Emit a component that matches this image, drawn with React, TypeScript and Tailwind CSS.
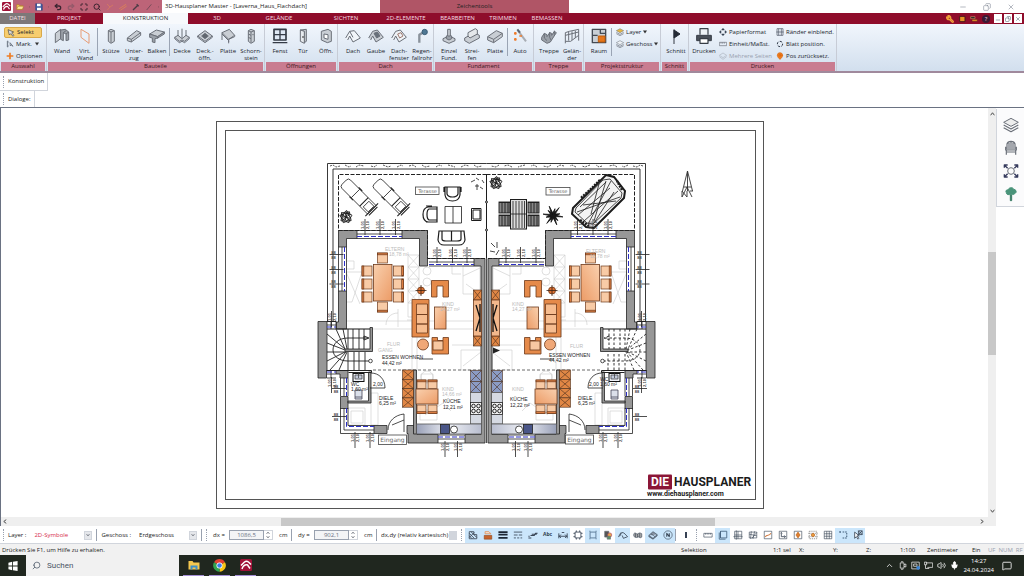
import React from "react";
import type { ReactNode } from "react";
import { Search, Undo2, Redo2, Maximize, Wrench, Mic, Volume2, MessageSquare, ChevronUp, Minus, Copy, X, MapPin } from "lucide-react";

/* ---------- small shared pieces ---------- */

const Svg = ({ children, className = "h-4 w-4", box = "0 0 24 24" }: { children: ReactNode; className?: string; box?: string }) => (
  <svg viewBox={box} className={className} fill="none" stroke="#6b7079" strokeWidth="1.5" strokeLinejoin="round" aria-hidden="true">
    {children}
  </svg>
);

const Grip = () => <span className="h-3 shrink-0 border-l border-dotted border-gray-400" />;
const Rule = () => <span className="h-3 shrink-0 border-l border-gray-400" />;

/* ---------- ribbon icons ---------- */

const F = "#c9ced4";
const D = "#9ba1a9";
const icons: Record<string, ReactNode> = {
  wand: <><path d="M2 8l8-6v14l-8 6z" fill={F} /><path d="M10 3l7-1 5 4v12l-4 1V9l-4-2v12l-4-2z" fill={D} /><path d="M14 7l4-3M18 9l4-3" /></>,
  virt: <path d="M6 2l12 7v14L6 14z" stroke="#e79b74" />,
  stuetze: <><path d="M8 4l4-2 5 2v16l-5 3-4-3z" fill={F} /><path d="M8 4l4 2 5-2M12 6v16" /></>,
  unter: <><path d="M2 15L16 4l6 3v4L8 21l-6-2z" fill={F} /><path d="M2 15l6 2L22 7M8 17v4" /></>,
  balken: <><path d="M1 9l10-6 12 3-10 7z" fill={F} /><path d="M1 9v5l4 1v6l4 1v-6l4-1 10-6V6L13 13zM13 13v3" fill={D} /></>,
  decke: <><path d="M1 14l5-3 6 5 6-5 5 3-7 6-4-2-4 2z" fill={F} /><path d="M6 3v9M12 1v14M18 3v9M1 14v2l7 6 4-2 4 2 7-6v-2" /></>,
  deckoeffn: <><path d="M1 12l11-8 11 8-11 8z" fill={F} /><path d="M7 12l5-4 5 4-5 4z" fill="#60666e" /><path d="M1 12v2l11 8 11-8v-2" /></>,
  platte: <><path d="M3 7l11-5 8 9-9 6z" fill={F} /><path d="M3 7v11M3 9l10 10v4M13 17l9-4v-2M13 17v4" /></>,
  schorn: <><path d="M8 4l4-2 5 2v16l-5 3-4-3z" fill={F} /><path d="M8 4l4 2 5-2M12 6v16M8 9l4 2M8 14l4 2M14 10h2" /></>,
  fenst: <><path d="M3 2h18v16H3z" fill="#dfe9f5" stroke="#343b46" strokeWidth="2.5" /><path d="M12 2v16M3 10h18M1 22h22" stroke="#343b46" strokeWidth="2" /></>,
  tuer: <><path d="M8 3l9-1v18l-3 2V5z" fill={F} /><path d="M8 3v17l6 3V5z" fill="#e7ebef" /><path d="M12 12v3" stroke="#333" /></>,
  oeffn: <><path d="M5 5l10-3 5 3v15l-6 2-9-4z" fill={F} /><path d="M9 9l6 1v7l-6-2z" fill="#fff" /></>,
  dach: <path d="M1 15L7 5l7-1 9 11-11 6-5-9-3 6M7 5l5 9" fill="#f2f6fa" />,
  gaube: <><path d="M1 15L7 5l7-2 9 11-11 7-5-9-3 6" fill={F} /><path d="M9 8l5-2 4 6-5 3z" fill="#68707a" /></>,
  dachfenster: <><path d="M1 15L7 5l7-2 9 11-11 7-5-9-3 6" fill="#eef2f6" /><path d="M10 9l5-2 3 5-5 3z" stroke="#a07a70" /></>,
  regen: <><path d="M8 22V10l5-3h3" strokeWidth="3.5" stroke="#8a929b" /><circle cx="16" cy="6" r="4" fill="#4f7894" stroke="#3e6079" /></>,
  einzel: <><path d="M3 16l9-4 9 4v3l-9 4-9-4z" fill={F} /><path d="M8 12l4-2 4 2v4l-4 2-4-2z" fill={D} /><path d="M10 2h4v10h-4z" fill={F} /></>,
  streifen: <><path d="M1 15l15-8 7 4v4L8 23l-7-4z" fill={F} /><path d="M6 12V7l11-6 3 2v6L9 15z" fill="#e5e8eb" /></>,
  platte2: <><path d="M1 13L14 4l9 4v5L10 22l-9-4z" fill={F} /><path d="M1 13l9 4L23 8M10 17v5" /></>,
  auto: <><path d="M9 4l12 16" strokeWidth="3" stroke="#a8adb4" /><path d="M8 2l4 5" stroke="#5c6570" strokeWidth="3" /><path d="M3 8h4M5 6v4M3 17h4M5 15v4M11 12h4" stroke="#ef7b2b" strokeWidth="2.5" /></>,
  treppe: <><path d="M1 14l4-6 4 2v3l4-6 3 1v3l4-6 3 2-9 14-5 2-8-5z" fill={D} /><path d="M5 8v7l4 4M13 6v8l2 4M20 4v6" /></>,
  gelaender: <><path d="M2 7l6-2 14-3v17M2 7v16M2 20h8l12-9M7 6v13M12 5v13M17 4v11M2 11l20-5" /></>,
  raum: <><path d="M2 2h20v20H2z" fill={F} stroke="#454b54" strokeWidth="2" /><path d="M11 12h10v9H11z" fill="#e6761b" stroke="#c25e0c" /><path d="M2 11h8M14 2v6h8" stroke="#454b54" strokeWidth="2" /></>,
  schnitt: <><path d="M9 2v22" stroke="#323842" strokeWidth="1.5" /><path d="M9 3l9 6-9 6z" fill="#252b36" stroke="#252b36" /></>,
  drucken: <><path d="M6 10V1h12v9" fill="#eef2f6" stroke="#3b414a" strokeWidth="1.8" /><path d="M1 11h22v8H1z" fill="#4a5059" stroke="#363c45" /><path d="M6 16h12v7H6z" fill="#fff" stroke="#363c45" strokeWidth="1.8" /></>,
};

const Tool = ({ icon, label }: { icon: string; label: string }) => (
  <button className="flex w-[22px] shrink-0 flex-col items-center gap-1">
    <Svg>{icons[icon]}</Svg>
    <span className="whitespace-pre text-center leading-[7px]">{label}</span>
  </button>
);

const Group = ({ title, className, children }: { title: string; className: string; children: ReactNode }) => (
  <section className={`flex shrink-0 flex-col border-r border-[#c7ccd6] ${className}`}>
    <div className="flex min-h-0 flex-1 items-start gap-px px-1 pt-1">{children}</div>
    <h2 className="mx-px h-[9px] shrink-0 bg-[#c97c90] text-center leading-[9px] text-[#3b1722]">{title}</h2>
  </section>
);

const Divider = () => <span className="h-7 shrink-0 border-l border-[#9aa4b4]" />;

const MiniTool = ({ children, icon, muted = false }: { children: ReactNode; icon: ReactNode; muted?: boolean }) => (
  <button className={`flex h-3 items-center gap-[2px] whitespace-nowrap ${muted ? "text-gray-400" : ""}`}>
    {icon}
    {children}
  </button>
);

const MiniColumn = ({ children }: { children: ReactNode }) => <div className="-mt-[2px] flex flex-col pl-[3px]">{children}</div>;

const Caret = () => <Svg className="h-1 w-1" box="0 0 8 8"><path d="M0 1h8L4 7z" fill="#333" stroke="none" /></Svg>;

const LayersIcon = ({ color }: { color: string }) => (
  <Svg className="h-2 w-2"><path d="M1 8l11-6 11 6-11 6z" fill={color} /><path d="M1 13l11 6 11-6M1 17l11 6 11-6" strokeWidth="2" /></Svg>
);

const Ribbon = () => (
  <div className="flex h-[49px] shrink-0 overflow-hidden border-b-2 border-[#a0899c] bg-linear-to-b from-[#f1f6fc] to-[#d2dfee] text-[6px] font-medium text-[#20242c]">
    <Group title="Auswahl" className="w-[47px]">
      <div className="-mt-px flex flex-col">
        <button className="flex h-[11px] items-center gap-[2px] rounded-xs border border-[#d9a94a] bg-[#f7cd6e] px-[2px]">
          <Svg className="h-2 w-2"><path d="M3 2l4 16 4-4 7 8 3-3-7-7 6-3z" fill="#ddd" stroke="#444" strokeWidth="2" /></Svg>
          Selekt
        </button>
        <MiniTool icon={<Svg className="ml-[2px] h-2 w-2"><path d="M5 2v20M2 6h6M2 18h6M2 12h4M12 8l1 10 3-3 5 4z" stroke="#4c5665" strokeWidth="2" /></Svg>}>Mark.&nbsp; <Caret /></MiniTool>
        <MiniTool icon={<Svg className="ml-[2px] h-2 w-2"><path d="M12 2v20M2 12h20" stroke="#ee7d24" strokeWidth="5" /></Svg>}>Optionen</MiniTool>
      </div>
    </Group>
    <Group title="Bauteile" className="w-[218px]">
      <Tool icon="wand" label="Wand" />
      <Tool icon="virt" label={"Virt.\nWand"} />
      <Divider />
      <div className="w-px" />
      <Tool icon="stuetze" label="Stütze" />
      <Tool icon="unter" label={"Unter-\nzug"} />
      <Tool icon="balken" label="Balken" />
      <Divider />
      <Tool icon="decke" label="Decke" />
      <Tool icon="deckoeffn" label={"Deck.-\nöffn."} />
      <Tool icon="platte" label="Platte" />
      <Tool icon="schorn" label={"Schorn-\nstein"} />
    </Group>
    <Group title="Öffnungen" className="w-[73px]">
      <Tool icon="fenst" label="Fenst" />
      <Tool icon="tuer" label="Tür" />
      <Tool icon="oeffn" label="Öffn." />
    </Group>
    <Group title="Dach" className="w-24">
      <Tool icon="dach" label="Dach" />
      <Tool icon="gaube" label="Gaube" />
      <Tool icon="dachfenster" label={"Dach-\nfenster"} />
      <Tool icon="regen" label={"Regen-\nfallrohr"} />
    </Group>
    <Group title="Fundament" className="w-[100px]">
      <Tool icon="einzel" label={"Einzel\nFund."} />
      <Tool icon="streifen" label={"Strei-\nfen"} />
      <Tool icon="platte2" label="Platte" />
      <Divider />
      <Tool icon="auto" label="Auto" />
    </Group>
    <Group title="Treppe" className="w-[50px]">
      <Tool icon="treppe" label="Treppe" />
      <Tool icon="gelaender" label={"Gelän-\nder"} />
    </Group>
    <Group title="Projektstruktur" className="w-[77px]">
      <Tool icon="raum" label="Raum" />
      <Divider />
      <MiniColumn>
        <MiniTool icon={<LayersIcon color="#e8b73e" />}>Layer <Caret /></MiniTool>
        <MiniTool icon={<LayersIcon color="#eef2f6" />}>Geschoss <Caret /></MiniTool>
      </MiniColumn>
    </Group>
    <Group title="Schnitt" className="w-7">
      <Tool icon="schnitt" label="Schnitt" />
    </Group>
    <Group title="Drucken" className="w-[148px]">
      <Tool icon="drucken" label="Drucken" />
      <MiniColumn>
        <MiniTool icon={<Svg className="h-2 w-2"><path d="M12 1l4 5H8zM12 23l4-5H8zM1 12l5-4v8zM23 12l-5-4v8z" fill="#2f3a4a" stroke="#2f3a4a" /></Svg>}>Papierformat</MiniTool>
        <MiniTool icon={<Svg className="h-2 w-2"><path d="M1 7h22v10H1zM6 7v4M11 7v4M16 7v4" strokeWidth="2" /></Svg>}>Einheit/Maßst.</MiniTool>
        <MiniTool muted icon={<Svg className="h-2 w-2 opacity-40"><path d="M1 10l11-7 11 7-11 7zM1 14l11 8 11-8" strokeWidth="2" /></Svg>}>Mehrere Seiten</MiniTool>
      </MiniColumn>
      <MiniColumn>
        <MiniTool icon={<Svg className="h-2 w-2"><path d="M3 2h18v20H3zM8 2v20M16 2v20M1 12h22" stroke="#4a5260" strokeWidth="2" /></Svg>}>Ränder einblend.</MiniTool>
        <MiniTool icon={<Svg className="h-2 w-2"><circle cx="12" cy="12" r="8" stroke="#303a48" strokeWidth="3" strokeDasharray="8 4" /></Svg>}>Blatt position.</MiniTool>
        <MiniTool icon={<MapPin className="h-2 w-2 fill-[#ef7d1e] text-[#d9660d]" aria-hidden="true" />}>Pos zurücksetz.</MiniTool>
      </MiniColumn>
    </Group>
  </div>
);

/* ---------- title bar and tabs ---------- */

const Logo = ({ className }: { className: string }) => (
  <svg viewBox="0 0 24 24" className={className} aria-hidden="true">
    <rect width="24" height="24" rx="3" fill="#a01238" />
    <path d="M2 13L9 6q4-3 8 0l5 5M4 20c2-7 7-9 12-8M15 12l5 7" fill="none" stroke="#fff" strokeWidth="3" />
  </svg>
);

const TitleBar = () => (
  <header className="flex h-[13px] shrink-0 items-stretch bg-white text-[6px] text-[#222]">
    <div className="flex w-[13px] shrink-0 items-center justify-center"><Logo className="h-[9px] w-[9px]" /></div>
    <div className="flex w-[149px] shrink-0 items-center gap-[5px] bg-[#bd6478] px-[3px] text-[#3b2430]">
      <button aria-label="Öffnen"><Svg className="h-2 w-2"><path d="M2 5h7l2 3h9v11H2z" fill="#f0c657" stroke="#a97d1f" /><path d="M2 19l4-9h17l-4 9z" fill="#fbe29a" stroke="#a97d1f" /></Svg></button>
      <Caret />
      <button aria-label="Speichern"><Svg className="h-2 w-2"><path d="M2 2h17l3 3v17H2z" fill="#3f5ba0" stroke="#2f437b" /><path d="M6 2h11v8H6zM6 14h12v8H6z" fill="#fff" stroke="none" /></Svg></button>
      <Caret />
      <button aria-label="Rückgängig"><Undo2 className="h-2 w-2" strokeWidth={4} /></button>
      <button aria-label="Wiederholen"><Redo2 className="h-2 w-2 text-[#94596a]" strokeWidth={4} /></button>
      <button aria-label="Alles zeigen"><Maximize className="h-2 w-2" strokeWidth={3} /></button>
      <button aria-label="Zoom"><Search className="h-2 w-2" strokeWidth={3} /></button>
      <button aria-label="Hilfslinie"><Svg className="h-2 w-2"><path d="M3 3l9 9 9-6M12 12L4 21" stroke="#dd8159" strokeWidth="2" /></Svg></button>
      <button aria-label="Parallele"><Svg className="h-2 w-2"><path d="M1 17L21 4M4 22L23 9" stroke="#e58d4f" strokeWidth="2" /></Svg></button>
      <button aria-label="Pipette"><Svg className="h-2 w-2"><path d="M3 21L16 8M14 4l6 6" stroke="#4a3b45" strokeWidth="4" /></Svg></button>
      <button aria-label="Messen"><Svg className="h-2 w-2"><path d="M5 21L19 4" stroke="#7a4c5b" strokeWidth="3" /></Svg></button>
      <Caret />
    </div>
    <h1 className="flex w-[218px] shrink-0 items-center overflow-hidden pl-[3px] whitespace-nowrap">3D-Hausplaner Master - [Laverna_Haus_Flachdach]</h1>
    <div className="flex w-[189px] shrink-0 items-center justify-center bg-[#b05566]">Zeichentools</div>
    <div className="flex flex-1 items-center justify-end gap-4 pr-[9px] text-gray-500">
      <button aria-label="Minimieren"><Minus className="h-2 w-2" strokeWidth={1.5} /></button>
      <button aria-label="Verkleinern"><Copy className="h-2 w-2 -scale-x-100" strokeWidth={1.5} /></button>
      <button aria-label="Schließen"><X className="h-2 w-2" strokeWidth={1.5} /></button>
    </div>
  </header>
);

const tabs: [string, string][] = [
  ["PROJEKT", "w-[68px]"], ["KONSTRUKTION", "w-[85px] bg-[#f7f9fc] text-[#222]"], ["3D", "w-[58px]"], ["GELÄNDE", "w-[66px]"],
  ["SICHTEN", "w-[68px]"], ["2D-ELEMENTE", "w-[52px]"], ["BEARBEITEN", "w-[51px]"], ["TRIMMEN", "w-10"], ["BEMASSEN", "w-12"],
];

const Tabs = () => (
  <nav className="flex h-[11px] shrink-0 items-stretch bg-[#8f0d2b] text-[6px] font-medium text-[#f5dfe4]">
    <button className="w-[35px] bg-[#7d7879]">DATEI</button>
    {tabs.map(([name, cls]) => <button key={name} className={cls}>{name}</button>)}
    <div className="ml-auto flex items-center gap-1 pr-[2px]">
      <button aria-label="Einstellungen"><Wrench className="h-2 w-2 -scale-x-100 text-[#f0a13a]" strokeWidth={4} /></button>
      <button aria-label="Fenster"><Svg className="h-2 w-2"><path d="M5 4h16v16H5z" fill="#e79328" stroke="#4b1a1a" strokeWidth="3" /></Svg></button>
      <button aria-label="Ansicht"><Svg className="h-2 w-2"><path d="M2 5h13v6H2z" fill="#222" stroke="#f0b27a" /><path d="M6 13h16v6H6z" fill="#e79328" stroke="#5a1a20" /></Svg></button>
      <button aria-label="Hilfe" className="h-2 w-2 rounded-full bg-[#3b1b34] leading-[8px]">?</button>
      <div className="flex gap-[2px]">
        <button aria-label="Dokument minimieren" className="flex h-[9px] w-2 items-end justify-center bg-white text-gray-600"><Minus className="h-[6px] w-[6px]" /></button>
        <button aria-label="Dokument verkleinern" className="flex h-[9px] w-2 items-center justify-center bg-white text-gray-600"><Copy className="h-[6px] w-[6px] -scale-x-100" /></button>
        <button aria-label="Dokument schließen" className="flex h-[9px] w-2 items-center justify-center bg-white text-gray-600"><X className="h-[6px] w-[6px]" /></button>
      </div>
    </div>
  </nav>
);

/* ---------- floor plan ---------- */

const range = (n: number) => Array.from({ length: n }, (_, i) => i);
const mx = (x: number) => 973 - x;

const Crossed = ({ x, y, w, h, fill }: { x: number; y: number; w: number; h: number; fill: string }) => (
  <g stroke="#4a2d1c" strokeWidth="0.6">
    <rect x={x} y={y} width={w} height={h} fill={fill} />
    <path d={`M${x} ${y}l${w} ${h}M${x + w} ${y}l${-w} ${h}`} />
  </g>
);

const Chair = ({ x, y, w = 10, h = 10, back }: { x: number; y: number; w?: number; h?: number; back: "l" | "r" | "t" | "b" }) => (
  <g stroke="#6d3a1c" strokeWidth="0.7">
    <rect x={x} y={y} width={w} height={h} fill="#f8cba6" />
    {back === "l" && <rect x={x} y={y} width="1.8" height={h} fill="#e08144" />}
    {back === "r" && <rect x={x + w - 1.8} y={y} width="1.8" height={h} fill="#e08144" />}
    {back === "t" && <rect x={x} y={y} width={w} height="1.8" fill="#e08144" />}
    {back === "b" && <rect x={x} y={y + h - 1.8} width={w} height="1.8" fill="#e08144" />}
  </g>
);

const Win = ({ d, o }: { d: string; o: string }) => (
  <g fill="none">
    <path d={d} stroke="#222" strokeWidth="0.8" />
    <path d={o} stroke="#2c2fc4" strokeWidth="1" strokeDasharray="5 2" />
  </g>
);

/* One semi-detached unit; the second one is its mirror image. */
const Unit = ({ dashedStairs = false }: { dashedStairs?: boolean }) => (
  <g>
    {/* faint plan of the upper storey */}
    <g fill="none" stroke="#c9c9c9" strokeWidth="0.6">
      <path d="M346 261h8v8h-8M346 272h16l-10 30h-6M346 272l14 32M408 255h11v62h-11zM408 267h11M408 279h11M408 291h11M408 303h11M408 255l11 12M419 255l-11 12M408 267l11 12M419 267l-11 12M408 279l11 12M419 279l-11 12M408 291l11 12M419 291l-11 12M463 266h17v28h-17zM463 276l17-8M466 284l14 10M452 266v8h9" />
      <path d="M346 321h135M346 329h135M398 313c-8 0-12 6-12 12M398 309v18M407 320h5v50M452 345h29v25M461 350h20v20h-20zM463 366l18-14M421 374h12v8h-12zM417 330v40M371 393h7v32h-7zM348 408h17v17h-17zM351 411h12v12h-12zM420 410h17v10h-17zM425 415l18-12 8 8" />
      <circle cx="427" cy="271" r="4" /><circle cx="427" cy="282" r="4" /><circle cx="427" cy="377" r="6" />
    </g>
    {/* walls */}
    <g fill="#979797" stroke="#222" strokeWidth="0.8">
      <path d="M338.500 230.500H357v8H346.500V247h-8zM402 230.500h25.500V266H419.500V238.500H402zM474 258.500h11V443H465v-8.500h16V266H474zM338.500 291h8v38h-10v-7h2z" />
      <path d="M318 321.500h9v49h-.5v7.500H318zM336 370.500h12v7.500h-8v-4h-4zM340.500 396.500h7.500v12h-7.500zM374 425.500h13v8h-13zM407 425.500h7V433h3v1.500h21v8.500h-30v-9.500h-1z" />
      <path d="M370 327.500h2.500v24H345v-2.500h25zM368.500 372h2.500v31h-23v-2h20.500zM413.500 370h3v64h-3z" />
    </g>
    <path d="M327 321.500h9M327 329h43M326.500 370.500h45v2h-23" fill="none" stroke="#222" strokeWidth="1" />
    {/* windows */}
    <Win d="M357 230.500h45M357 234h45M357 238.500h45" o="M357 236.500h45" />
    <Win d="M429 258.500h45M429 262h45M429 266h45" o="M429 264.500h45" />
    <Win d="M338.500 247v44M342 247v44M346.500 247v44" o="M344.500 247v44" />
    <Win d="M340.500 378v18M344 378v18M348 378v18" o="M346.500 378v18" />
    <Win d="M340.500 408v25.500H374M344 408v22h30M348 408v17.500h26" o="M346.500 408v18.500H374" />
    <Win d="M438 435h27M438 439h27M438 443h27" o="M438 437h27" />
    <Win d="M327 325h9M331 321v8M336 321v8M327 374h9M327 378h9M331 371v7" o="M327 327h9M327 372h9" />
    {/* stairs */}
    <g fill="none" stroke="#222" strokeWidth="0.9" strokeDasharray={dashedStairs ? "2.5 2" : undefined}>
      <path d="M364 329v20M359 329v20M353 329v20M348 329v20M343 329l4 20M336 329l9 20M327 334l18 15M327 343l18 7M327 352h18M327 361l18-9M330 370l16-18M339 370l8-18M348 370v-18M354 370v-18M359 370v-18M365 370v-18" />
      <path d="M368 338h-20c-10 0-15 6-15 12s6 11 15 11h22M364 336l5 2-5 2z" />
    </g>
    <circle cx="370.500" cy="361" r="1.800" fill="#fff" stroke="#222" strokeWidth="0.8" />
    <path d="M373 370H481" stroke="#444" strokeWidth="0.8" strokeDasharray="3 2" />
    {/* doors */}
    <g fill="none" stroke="#222" strokeWidth="0.8">
      <path d="M370 388h15c0-9-6-15-14-15M388 430c0-9 7-15 16-16v18M392 425l12-5M433 359h-14" />
    </g>
    {/* dining area */}
    <g stroke="#6d3a1c" strokeWidth="0.8">
      <rect x="373.500" y="264.500" width="18.500" height="36.500" fill="url(#wood)" />
      <rect x="434.500" y="307" width="11.500" height="22" fill="url(#wood)" />
      <path d="M431.500 280.500H448.500V297H443v-11h-6v11h-5.500zM412 299.500h17V337h-17z" fill="#e58a4a" />
      <path d="M416.500 304H427.500v10.500h-11zM416.500 314.500h11V324h-11zM416.500 324h11v9h-11z" fill="#f7bd90" />
      <path d="M432 337.500h5.500v3H443v-3h5.500V354H432z" fill="#e58a4a" />
      <rect x="433" y="341" width="10" height="9" fill="#f7c8a2" />
      <circle cx="423" cy="344.500" r="5.500" fill="#f0a878" />
      <circle cx="421" cy="290.500" r="3.500" fill="#dd7030" />
      <path d="M415.500 290.500h11M421 285v11" stroke="#3a2418" />
      <rect x="416" y="389" width="22" height="15" fill="url(#wood)" />
    </g>
    {[266, 279, 292].map((y) => <g key={y}><Chair x={362} y={y} back="l" /><Chair x={393.5} y={y} back="r" /></g>)}
    <Chair x={377.5} y={253} back="t" /><Chair x={377.5} y={302} back="b" />
    <Chair x={417} y={380} h={8.5} w={9} back="t" /><Chair x={428} y={380} h={8.5} w={9} back="t" />
    <Chair x={417} y={405} h={8.5} w={9} back="b" /><Chair x={428} y={405} h={8.5} w={9} back="b" />
    {/* cabinets */}
    {range(4).map((i) => <Crossed key={i} x={402.5} y={370 + i * 9.3} w={11} h={9.3} fill="#e18745" />)}
    <Crossed x={473.5} y={290} w={8} h={10} fill="#e18745" />
    <Crossed x={473.5} y={336} w={8} h={10} fill="#e18745" />
    <rect x="473.500" y="300" width="8" height="36" fill="#f3b88c" stroke="#6d3a1c" strokeWidth="0.8" />
    <path d="M480 304v28M476 305l4 13-4 13" fill="none" stroke="#111" strokeWidth="1.300" />
    <Crossed x={470.5} y={370.5} w={11} h={11} fill="#8b9bc4" />
    <Crossed x={470.5} y={381.5} w={11} h={11} fill="#8b9bc4" />
    <g stroke="#555" strokeWidth="0.8">
      <rect x="470.500" y="392.500" width="11" height="31.500" fill="#d5d9e2" />
      <rect x="416.500" y="424" width="65" height="10" fill="url(#steel)" />
      <rect x="470.500" y="402.500" width="11" height="12" fill="#f3f3f3" stroke="#222" />
      <rect x="440.500" y="424.500" width="9" height="9" fill="#4a5688" stroke="#222" />
      <circle cx="454" cy="429.500" r="3.500" fill="#fff" stroke="#222" />
    </g>
    <g fill="none" stroke="#111" strokeWidth="0.9">
      <circle cx="473.500" cy="406" r="1.800" /><circle cx="478.500" cy="406" r="1.800" /><circle cx="473.500" cy="411" r="1.800" /><circle cx="478.500" cy="411" r="1.800" />
    </g>
    {/* bathroom */}
    <rect x="353" y="373.500" width="11" height="8" fill="#eef0f6" stroke="#111" />
    <path d="M355 375h7v4h-7zM358.500 373v5" fill="#c3cadb" stroke="#333" strokeWidth="0.7" />
    <path d="M355 390h7v9h-7zM355 397h7" fill="#dbe0ea" stroke="#445" strokeWidth="0.8" />
    {/* terrace and garden edge */}
    <g fill="none" stroke="#222" strokeWidth="0.9">
      <path d="M486.500 163.500H327.500v158M486.500 169H333v152" />
      <path d="M486.500 174.500H338.500v56M338.500 230.500h89v28h59" strokeDasharray="4 1.5" strokeWidth="1" />
    </g>
    <path d="M330 166l3-1 3 2 4-1M345 165l4 2 2-1M356 167l3-2 5 1M371 166l3 1 3-2M383 165l5 2 3-1M397 167l4-2 2 1M409 166l4-1 3 2M422 165l3 2 5-1M436 167l3-2 3 1M448 165l4 1 3 1M461 167l4-2 4 1M474 165l3 2 5-1" fill="none" stroke="#444" strokeWidth="0.9" strokeDasharray="2 1" />
  </g>
);

const tops: [number, number][] = [[365, 225], [380, 225], [395.5, 225], [437, 253], [452.5, 253], [467, 253], [355, 438], [370, 438], [445, 447], [457.5, 447], [331.5, 317], [331.5, 383]];
const sides: [number, number][] = [[333.5, 254.5], [333.5, 269.5], [333.5, 284], [336, 388.5], [336, 416.5]];

const Dimensions = () => (
  <g fontSize="4" fontWeight="700" fill="#444" textAnchor="middle" fontFamily="Liberation Sans, sans-serif">
    {[...tops, ...tops.map(([x, y]): [number, number] => [mx(x), y])].map(([x, y]) => (
      <g key={`${x}-${y}`}>
        <path d={`M${x} ${y - 6}v16`} stroke="#222" strokeWidth="0.8" />
        <text transform={`translate(${x - 1} ${y}) rotate(-90)`}>1,01</text>
        <text transform={`translate(${x + 4} ${y}) rotate(-90)`}>2,10</text>
      </g>
    ))}
    {[...sides, ...sides.map(([x, y]): [number, number] => [mx(x), y])].map(([x, y]) => (
      <g key={`${x}-${y}`}>
        <path d={`M${x - 4} ${y}h14`} stroke="#222" strokeWidth="0.8" />
        <text x={x} y={y - 1}>88</text>
        <text x={x} y={y + 4}>88</text>
      </g>
    ))}
  </g>
);

const Lounger = ({ x }: { x: number }) => (
  <g transform={`translate(${x} 0) rotate(45 347 185)`} fill="#fff" stroke="#222" strokeWidth="0.8">
    <path d="M346 179h36v12h-36q-3 0-3-3v-6q0-3 3-3zM359 179v12M374 181h7v8h-7z" />
    <path d="M357 178.500h5M357 191.500h5M382 176v18M384 179v12M371 179v12" strokeWidth="1.100" />
  </g>
);

const Bush = ({ x, y, r }: { x: number; y: number; r: number }) => (
  <g transform={`translate(${x} ${y})`} fill="none" stroke="#222" strokeWidth="0.9">
    {range(9).map((i) => (
      <path key={i} transform={`rotate(${i * 40 + (i % 2) * 12})`} d={`M0 0l${r * 0.5} ${-r * 0.3} ${r * 0.2} ${r * 0.5} ${r * 0.3} ${-r * 0.5}-${r * 0.6}-${r * 0.3}`} />
    ))}
  </g>
);

const TerraceFurniture = () => (
  <g fill="#fff" stroke="#1c1c1c" strokeWidth="1">
    <Lounger x={0} />
    <Lounger x={32} />
    <Bush x={346} y={217} r={6} />
    <path d="M445 187h15v8q-1 6-7.500 6t-7.500-6zM447 187v7q1 3 5.500 3t5.500-3v-7M444 187v5M461 187v5" strokeWidth="1.200" />
    <path d="M437 207h-9q-5 1-5 7.500t5 7.500h9zM437 209h-8q-2 1-2 5.500t2 5.500h8M426 206h6M426 222h6" strokeWidth="1.200" />
    <path d="M445 206.500h16.500V223H445zM453 206.500V223" strokeWidth="0.8" />
    <path d="M471.500 208.500h9.500v12h-9.500zM473 210h7v9h-7z" />
    <path d="M439 231h25l1 9q-1 5-6 5h-15q-5 0-6-5zM442 231v8q0 2 4 2h11q4 0 4-2v-8M451.500 231v10" strokeWidth="1.200" />
    <path d="M471 182l4-2M476 178l3 2M482 180l2 3M475 186h4M477 184v6M480 187l3 2M491 243l4 4M497 242v6M490 251l5 1M499 250l-3 5" strokeWidth="0.8" />
    <Bush x={496} y={183} r={6} />
    {[499, 528].map((x) => [202, 215].map((y) => <g key={`${x}${y}`} strokeWidth="0.9"><rect x={x} y={y} width="11" height="11" fill="#888" /><path d={`M${x + 3} ${y}v11M${x + 6} ${y}v11M${x + 9} ${y}v11M${x} ${y + 0.5}h11`} /></g>))}
    <rect x="510.500" y="199.500" width="16" height="29.500" fill="#ddd" />
    <path d="M513 201v27M516 201v27M519 201v27M522 201v27M524.500 201v27M511 214h15" strokeWidth="0.8" />
    <g transform="translate(553 215.500)" fill="#111">{range(12).map((i) => <path key={i} transform={`rotate(${i * 30 + 8})`} d={i % 2 ? "M-1 0L0-10 1 0z" : "M-1.500 0L1-7 1.500 0z"} strokeWidth="0.8" />)}</g>
    <path d="M606 175l8 2 11 14-1 7-30 30-8-1-14-13 1-6z" strokeWidth="2" fill="#f3f3f3" />
    <path d="M603 180l7-1 12 14-1 5-28 26-6-1-12-11 1-4zM580 207l26-25M584 221l34-30M577 212l43-15M588 224l23-43M594 223l20-31M583 205l33-4M599 184l-8 30M578 215l32-27M606 181l-12 40" fill="none" strokeWidth="0.8" />
    <path d="M600 180l-8 8-11 10M622 190l-5-9M580 220l9 6" fill="none" strokeWidth="2.500" strokeDasharray="2 1" />
    <path d="M486.500 174v84" strokeWidth="1" />
    <circle cx="486.500" cy="202" r="1" /><circle cx="486.500" cy="230" r="1" />
  </g>
);

const RoomLabels = () => (
  <g fontFamily="Liberation Sans, sans-serif" fontSize="5" fill="#222">
    <g fill="#bbb">
      <text x="385" y="251">ELTERN</text><text x="389" y="256">18,78 m²</text>
      <text x="586" y="253">ELTERN</text><text x="590" y="258">18,78 m²</text>
      <text x="442" y="306">KIND</text><text x="440" y="311">14,27 m²</text>
      <text x="512" y="306">KIND</text><text x="512" y="311">14,27 m²</text>
      <text x="387" y="346">FLUR</text><text x="378" y="352">GANG</text><text x="570" y="348">FLUR</text>
      <text x="442" y="391">KIND</text><text x="442" y="396">14,66 m²</text><text x="512" y="391">KIND</text>
    </g>
    <text x="382" y="359">ESSEN WOHNEN</text><text x="382" y="365">44,42 m²</text>
    <text x="549" y="357">ESSEN WOHNEN</text><text x="549" y="362">44,42 m²</text>
    <text x="379" y="400">DIELE</text><text x="379" y="405">6,25 m²</text>
    <text x="578" y="400">DIELE</text><text x="578" y="405">6,25 m²</text>
    <text x="443" y="403">KÜCHE</text><text x="443" y="409">12,21 m²</text>
    <text x="510" y="401">KÜCHE</text><text x="510" y="407">12,22 m²</text>
    <text x="351" y="386">WC</text><text x="351" y="391">1,60 m²</text>
    <text x="600" y="381">WC</text><text x="589" y="386">2,00</text><text x="600" y="386">1,60 m²</text>
    <text x="373" y="386">2,00</text>
    <g fill="#fff" stroke="#444" strokeWidth="0.8">
      <rect x="415.500" y="187" width="23.500" height="7.500" /><rect x="546" y="187.500" width="24" height="7.500" />
      <rect x="378.500" y="435" width="28" height="9.500" /><rect x="565.500" y="435" width="28" height="9" />
    </g>
    <g fill="#666" fontFamily="DejaVu Sans, sans-serif" textAnchor="middle">
      <text x="427.500" y="192.500">Terasse</text><text x="558" y="193">Terasse</text>
      <g fontSize="6"><text x="392.500" y="442">Eingang</text><text x="579.500" y="442">Eingang</text></g>
    </g>
  </g>
);

const Plan = () => (
  <svg viewBox="1 108 987 409" className="h-full w-full" role="img" aria-label="Grundriss Laverna Haus">
    <defs>
      <linearGradient id="wood" x1="0" y1="0" x2="1" y2="1"><stop offset="0" stopColor="#f9d0ae" /><stop offset="1" stopColor="#ec9b66" /></linearGradient>
      <linearGradient id="steel" x1="0" y1="0" x2="1" y2="0"><stop offset="0" stopColor="#9aa1b8" /><stop offset="0.5" stopColor="#edeff5" /><stop offset="1" stopColor="#b8bdce" /></linearGradient>
    </defs>
    <g fill="#fff" stroke="#555" strokeWidth="1">
      <rect x="216.500" y="121.500" width="547" height="387" />
      <rect x="225.500" y="130.500" width="530" height="369" />
    </g>
    <Unit />
    <g transform="translate(973 0) scale(-1 1)"><Unit dashedStairs /></g>
    <path d="M486.500 258v185" stroke="#222" strokeWidth="0.8" />
    <path d="M493 347.500l7 3-7 3z" fill="#222" />
    <TerraceFurniture />
    <Dimensions />
    <RoomLabels />
    <g fill="none" stroke="#333" strokeWidth="0.9">
      <path d="M687.500 171l-5 20M687.500 171l5 20M687.500 171v20M682 197v-6l5 6v-6M684 187h7M690 191h3M682 197l5-10 5 10" />
    </g>
    <rect x="648" y="474.500" width="24" height="15" rx="1" fill="#8b1637" />
    <g fontFamily="Roboto, sans-serif" fontWeight="700" fontSize="12">
      <text x="651" y="486" fill="#fff">DIE</text>
      <text x="674" y="486" fill="#1b1b1b">HAUSPLANER</text>
      <text x="647" y="496" fontSize="7" fill="#1b1b1b">www.diehausplaner.com</text>
    </g>
  </svg>
);

/* ---------- lower tool bar ---------- */

const Combo = ({ id, label, value, cls }: { id: string; label: string; value: string; cls: string }) => (
  <div className="flex items-center">
    <label htmlFor={id} className="mr-2 whitespace-nowrap">{label}</label>
    <select id={id} defaultValue={value} className={`appearance-none bg-transparent ${cls}`}><option>{value}</option></select>
    <span className="flex h-[9px] w-2 items-center justify-center border border-gray-300 bg-gray-200"><Svg className="h-1 w-1" box="0 0 8 8"><path d="M1 2l3 4 3-4" /></Svg></span>
  </div>
);

const Coord = ({ id, label, value }: { id: string; label: string; value: string }) => (
  <div className="flex items-center">
    <label htmlFor={id} className="w-[18px] pl-[2px] whitespace-nowrap">{label}</label>
    <input id={id} defaultValue={value} className="h-[10px] w-[35px] border border-gray-400 bg-gray-100 text-center text-gray-500" />
    <span className="mr-[6px] flex h-[10px] w-[9px] items-center justify-center border border-l-0 border-gray-300">
      <Svg className="h-2 w-1" box="0 0 8 16"><path d="M1 6l3-4 3 4M1 10l3 4 3-4" /></Svg>
    </span>
    <span className="w-2">cm</span>
  </div>
);

const K = "#3a4656";
const bar1: [string, boolean, ReactNode][] = [
  ["Schraffur", true, <path d="M3 4h11v7h7v10H3zM3 8l12 12M3 14l7 7M7 4l14 14M3 18l12-12" stroke={K} strokeWidth="2" />],
  ["Füllung", true, <><path d="M3 13h18v9H3z" fill="#c8622a" stroke="#8d471c" /><path d="M5 9V4h9l5 5z" fill="#f5e3d3" stroke="#e0925c" strokeWidth="2" /></>],
  ["Linienstärke", true, <path d="M1 5h22M1 11h22M1 19h22" stroke="#1d2735" strokeWidth="4.500" />],
  ["Linienart", true, <path d="M2 5h20M2 12h9M14 12h8M2 19h5M10 19h5M18 19h4" stroke={K} strokeWidth="2" />],
  ["Bemaßung", true, <path d="M1 19h7M6 13h9l3-5h5M9 10h12M1 15h3" stroke={K} strokeWidth="2.500" />],
  ["Text", true, null],
  ["Maßkette", true, <path d="M2 8v12M22 8v12M2 15h20M7 11l-4 4 4 4M17 11l4 4-4 4M9 6h6" stroke={K} strokeWidth="2.200" />],
  ["Rahmen", false, <path d="M5 5h14v14H5zM1 8h4M1 16h4M19 8h4M19 16h4M8 1v4M16 1v4M8 19v4M16 19v4" stroke={K} strokeWidth="2" />],
  ["Auswahlrahmen", true, <path d="M5 5h14v14H5zM3 3h3M18 3h3M3 21h3M18 21h3" stroke="#4f6e8b" strokeWidth="2" />],
  ["Farben", false, <><path d="M4 3h10v14H4z" fill="#555" /><circle cx="16" cy="12" r="5" fill="#e8a94c" stroke="#a46" /><path d="M10 15h8v7h-8z" fill="#5b8f66" /></>],
  ["Dach", true, <path d="M1 17L7 6M4 15L9 6l5 1 9 9-10 4-3-7" stroke={K} strokeWidth="2" />],
  ["Gelände", false, <path d="M2 9c4-5 7 3 10 0s6-2 9 0v8c-4 4-7-2-10 0s-6 1-9-2zM6 8v9M11 9v9M16 8v9" fill="#aaa" stroke={K} />],
  ["Bodenplatte", true, <path d="M2 13l10-9 10 7-10 9zM2 13v3l10 6 10-8v-3M7 9l10 7" fill="#8793a3" stroke={K} />],
  ["Nord", true, <><circle cx="12" cy="12" r="10" stroke={K} strokeWidth="1.500" /><path d="M9 16V8l6 8V8" stroke={K} strokeWidth="2.500" /></>],
];
const bar2: [string, boolean, ReactNode][] = [
  ["Lineal", false, <path d="M2 8h20v9H2zM6 8v3M10 8v3M14 8v3M18 8v3" stroke={K} />],
  ["Blatt", true, <path d="M6 3h15v16H6zM3 6v16h15M6 3v16" stroke="#44607c" strokeWidth="2" />],
  ["Raster", false, <path d="M4 3h17v18H4zM4 12h17M12 3v18M8 1v22M1 16h22" stroke={K} strokeWidth="1.500" />],
  ["Raster drehen", false, <path d="M3 5h18v14H3zM8 3l-2 18M16 3l-4 18M3 10l18 4M21 6L9 20" stroke={K} strokeWidth="1.500" />],
  ["Kurve", false, <><path d="M3 3h18v18H3z" stroke={K} strokeWidth="1.500" /><path d="M5 17c5-9 9 0 14-9" stroke="#d27c43" strokeWidth="2.500" /></>],
  ["Winkel", false, <><path d="M3 3h18v18H3z" stroke={K} strokeWidth="1.500" /><path d="M8 6v10h10M15 13l3 3-3 3M6 8l2-2 2 2" stroke={K} strokeWidth="2" /></>],
  ["Punktfang", false, <><path d="M3 3h18v18H3z" stroke={K} strokeWidth="1.500" /><path d="M12 5l5 7-5 7-5-7z" fill="#df8030" stroke="#b65c13" /></>],
  ["Rasterfang", false, <><path d="M3 3h18v18H3zM1 8h22M1 16h22" stroke="#888" strokeWidth="2" strokeDasharray="3 2" /><path d="M12 7l5 5-5 5-5-5z" fill="#e89a3c" stroke="#b65c13" /></>],
  ["Gitter", false, <path d="M3 3h18v18H3zM3 9h18M3 15h18M9 3v18M15 3v18" stroke={K} strokeWidth="1.500" />],
  ["Gruppe", true, <path d="M3 4h5M5 3v6M11 5h10v14H9" stroke="#44607c" strokeWidth="2.500" strokeDasharray="4 2" />],
  ["Auswahl aufheben", true, <><path d="M4 5v15l4-4 4 6 2-2-4-6h5z" fill="#fff" stroke={K} strokeWidth="2" /><path d="M13 2h9v9h-9zM13 2l9 9M22 2l-9 9" stroke={K} strokeWidth="2" /></>],
];

const Toggle = ({ name, on, children }: { name: string; on: boolean; children: ReactNode }) => (
  <button aria-label={name} aria-pressed={on} className={`flex h-[15px] w-[15px] shrink-0 items-center justify-center ${on ? "bg-[#cbe6fb]" : ""}`}>
    {children ? <Svg className="h-[10px] w-[10px]">{children}</Svg> : <span className="text-[5px] font-bold text-[#2d3b4c]">Abc</span>}
  </button>
);

const OptionsBar = () => (
  <div className="flex h-[18px] shrink-0 items-center overflow-hidden border-b border-gray-300 bg-white pt-px text-[6px] font-medium text-[#222]">
    <div className="flex items-center gap-1 pl-[3px]">
      <Grip />
      <Combo id="layer" label="Layer :" value="2D-Symbole" cls="w-[50px] text-[#d62c4b]" />
      <Rule />
      <Combo id="geschoss" label="Geschoss :" value="Erdgeschoss" cls="w-[50px]" />
      <Rule />
      <Grip />
      <Coord id="dx" label="dx =" value="1086,5" />
      <Rule />
      <Coord id="dy" label="dy =" value="902,1" />
      <Rule />
      <select aria-label="Koordinaten" className="w-[68px] appearance-none" defaultValue="rel"><option value="rel">dx,dy (relativ kartesisch)</option></select>
      <span className="-ml-1 h-[9px] w-2 bg-gray-300" />
      <Grip />
    </div>
    <div className="flex pl-[3px]">{bar1.map(([n, on, i]) => <Toggle key={n} name={n} on={on}>{i}</Toggle>)}</div>
    <Rule />
    <button aria-label="Mehr" className="mx-[9px] h-[6px] w-[2px] bg-gray-700" />
    <Grip />
    <div className="flex pl-[3px]">{bar2.map(([n, on, i]) => <Toggle key={n} name={n} on={on}>{i}</Toggle>)}</div>
  </div>
);

const StatusBar = () => (
  <footer className="flex h-[11px] shrink-0 items-center overflow-hidden bg-[#f1f1f1] pt-px text-[6px] font-medium whitespace-nowrap text-[#222]">
    <span className="flex-1 pl-[2px]">Drücken Sie F1, um Hilfe zu erhalten.</span>
    <span className="w-[92px]">Selektion</span>
    <span className="w-[26px]">1:1 sel</span>
    <span className="w-[34px]">X:</span>
    <span className="w-[33px]">Y:</span>
    <span className="w-[34px]">Z:</span>
    <span className="w-[27px]">1:100</span>
    <span className="w-[45px]">Zentimeter</span>
    <span className="w-4">Ein</span>
    <span className="flex w-9 gap-[3px] text-gray-400"><span>UF</span><span>NUM</span><span>RF</span></span>
  </footer>
);

const TaskBar = () => (
  <div className="flex h-[21px] shrink-0 items-stretch bg-[#20271f] text-white">
    <button aria-label="Start" className="flex w-[26px] items-center justify-center">
      <Svg className="h-[10px] w-[10px]"><path d="M1 4l9-2v9H1zM12 2l11-2v11H12zM1 13h9v9l-9-2zM12 13h11v11l-11-2z" fill="#fff" stroke="none" /></Svg>
    </button>
    <label className="flex w-[153px] items-center gap-[6px] bg-[#f1f1f1] pl-[6px] text-gray-600">
      <Search className="h-[9px] w-[9px] -scale-x-100" aria-hidden="true" />
      <input aria-label="Suchen" placeholder="Suchen" className="w-24 text-[8px] font-['Roboto',sans-serif] placeholder:text-gray-600" />
    </label>
    <div className="flex gap-[5px] pl-1">
      <button aria-label="Explorer" className="flex w-[21px] items-center justify-center border-b border-[#a58fd6]">
        <Svg className="h-3 w-3"><path d="M1 4h8l2 3h12v14H1z" fill="#f4c84f" stroke="none" /><path d="M5 13h14v8h-4v-4H9v4H5z" fill="#3f90c9" stroke="none" /></Svg>
      </button>
      <button aria-label="Chrome" className="flex w-[21px] items-center justify-center border-b border-[#a58fd6]">
        <Svg className="h-[13px] w-[13px]">
          <g stroke="none"><path d="M12 12L2 6a11.500 11.500 0 0 1 20 0z" fill="#e34133" /><path d="M12 12L22 6a11.500 11.500 0 0 1-10 17.500z" fill="#f9c515" /><path d="M12 12v11.500A11.500 11.500 0 0 1 2 6z" fill="#32a350" /><circle cx="12" cy="12" r="5.500" fill="#fff" /><circle cx="12" cy="12" r="4.200" fill="#3b7ded" /></g>
        </Svg>
      </button>
      <button aria-label="3D-Hausplaner" className="flex w-[21px] items-center justify-center border-b border-[#a58fd6]"><Logo className="h-3 w-3" /></button>
    </div>
    <div className="ml-auto flex items-center gap-1 pr-3">
      <ChevronUp className="h-[9px] w-[9px]" />
      <Svg className="h-[9px] w-[9px]"><path d="M6 5h10v14H6zM16 10l5-2v8l-5-2M8 2h6M8 22h6" stroke="#eee" strokeWidth="2" /></Svg>
      <Svg className="h-[9px] w-[9px]"><path d="M2 3h20v18H2zM7 8h9v6H7z" stroke="#eee" strokeWidth="2" /><circle cx="19" cy="18" r="5" fill="#3c86d6" stroke="none" /></Svg>
      <Svg className="h-[9px] w-[9px]"><path d="M5 5h18v12H9M1 3h6v7H1zM4 10v10h10" stroke="#eee" strokeWidth="2" /></Svg>
      <Volume2 className="h-[9px] w-[9px]" />
      <Mic className="h-[9px] w-[9px] fill-white" />
      <div className="mr-1 text-center text-[6px] leading-[9px]">14:27<br />24.04.2024</div>
      <MessageSquare className="h-[10px] w-[10px]" />
    </div>
  </div>
);

/* ---------- page ---------- */

const SidePanel = () => (
  <aside className="mt-px flex w-7 flex-col items-center gap-[7px] self-start border-b border-l border-gray-300 bg-[#fbfbfc] pt-2 pb-1">
    <button aria-label="Ebenen"><Svg><path d="M1 8l11-6 11 6-11 6z" fill="#eee" /><path d="M1 12l11 6 11-6M1 16l11 6 11-6" strokeWidth="1.800" /></Svg></button>
    <button aria-label="Möbel"><Svg><path d="M6 14V6q1-4 6-4t6 4v8M9 4v10M12 3v11M15 4v10M4 10v5h16v-5M5 15v7M19 15v7M6 18h12" strokeWidth="1.800" /></Svg></button>
    <button aria-label="Objekte"><Svg><circle cx="12" cy="12" r="5" /><path d="M2 7V3h5M17 3h5v4M2 17v4h5M22 17v4h-5M3 4l4 4M21 4l-4 4M3 20l4-4M21 20l-4-4" stroke="#353a5c" strokeWidth="2" /></Svg></button>
    <button aria-label="Pflanzen"><Svg><path d="M11 22V13h2v9z" fill="#3c7d66" stroke="#3c7d66" /><path d="M5 10c-2-3 1-5 3-4 0-4 7-5 8-1 4 0 5 5 2 6-2 3-5 1-6 1-3 2-7 1-7-2z" fill="#4a947a" stroke="#4a947a" /></Svg></button>
  </aside>
);

export default function App() {
  return (
    <div className="flex h-screen flex-col overflow-hidden bg-white font-['Open_Sans','Noto_Sans',sans-serif]">
      <TitleBar />
      <Tabs />
      <Ribbon />
      <div className="flex h-[35px] shrink-0 flex-col items-start border-b border-gray-500 text-[6px] font-medium text-[#222]">
        <div className="flex h-[18px] items-center gap-1 border-r border-b border-gray-300 pr-[3px] pl-[3px]"><Grip />Konstruktion</div>
        <div className="flex h-4 items-center gap-1 border-r border-gray-300 pr-[3px] pl-[3px]"><Grip />Dialoge:</div>
      </div>
      <main className="flex min-h-0 flex-1">
        <div className="flex min-w-0 flex-1 flex-col border-l border-gray-500">
          <div className="flex min-h-0 flex-1">
            <div className="min-w-0 flex-1"><Plan /></div>
            <div className="flex w-2 flex-col items-center bg-[#efefef]">
              <Svg className="mt-1 h-1 w-[5px]" box="0 0 8 6"><path d="M1 5l3-4 3 4" stroke="#444" /></Svg>
              <div className="grow-[136]" />
              <div className="w-full grow-[103] bg-[#c8c8c8]" />
              <div className="grow-[154]" />
              <Svg className="mb-1 h-1 w-[5px]" box="0 0 8 6"><path d="M1 1l3 4 3-4" stroke="#444" /></Svg>
            </div>
          </div>
          <div className="flex h-[9px] items-center bg-[#efefef]">
            <Svg className="ml-[2px] h-[5px] w-1" box="0 0 6 8"><path d="M5 1L1 4l4 3" stroke="#444" /></Svg>
            <div className="grow-[274]" />
            <div className="h-2 grow-[435] bg-[#c8c8c8]" />
            <div className="grow-[265]" />
            <Svg className="mr-3 h-[5px] w-1" box="0 0 6 8"><path d="M1 1l4 3-4 3" stroke="#444" /></Svg>
          </div>
        </div>
        <SidePanel />
      </main>
      <OptionsBar />
      <StatusBar />
      <TaskBar />
    </div>
  );
}
